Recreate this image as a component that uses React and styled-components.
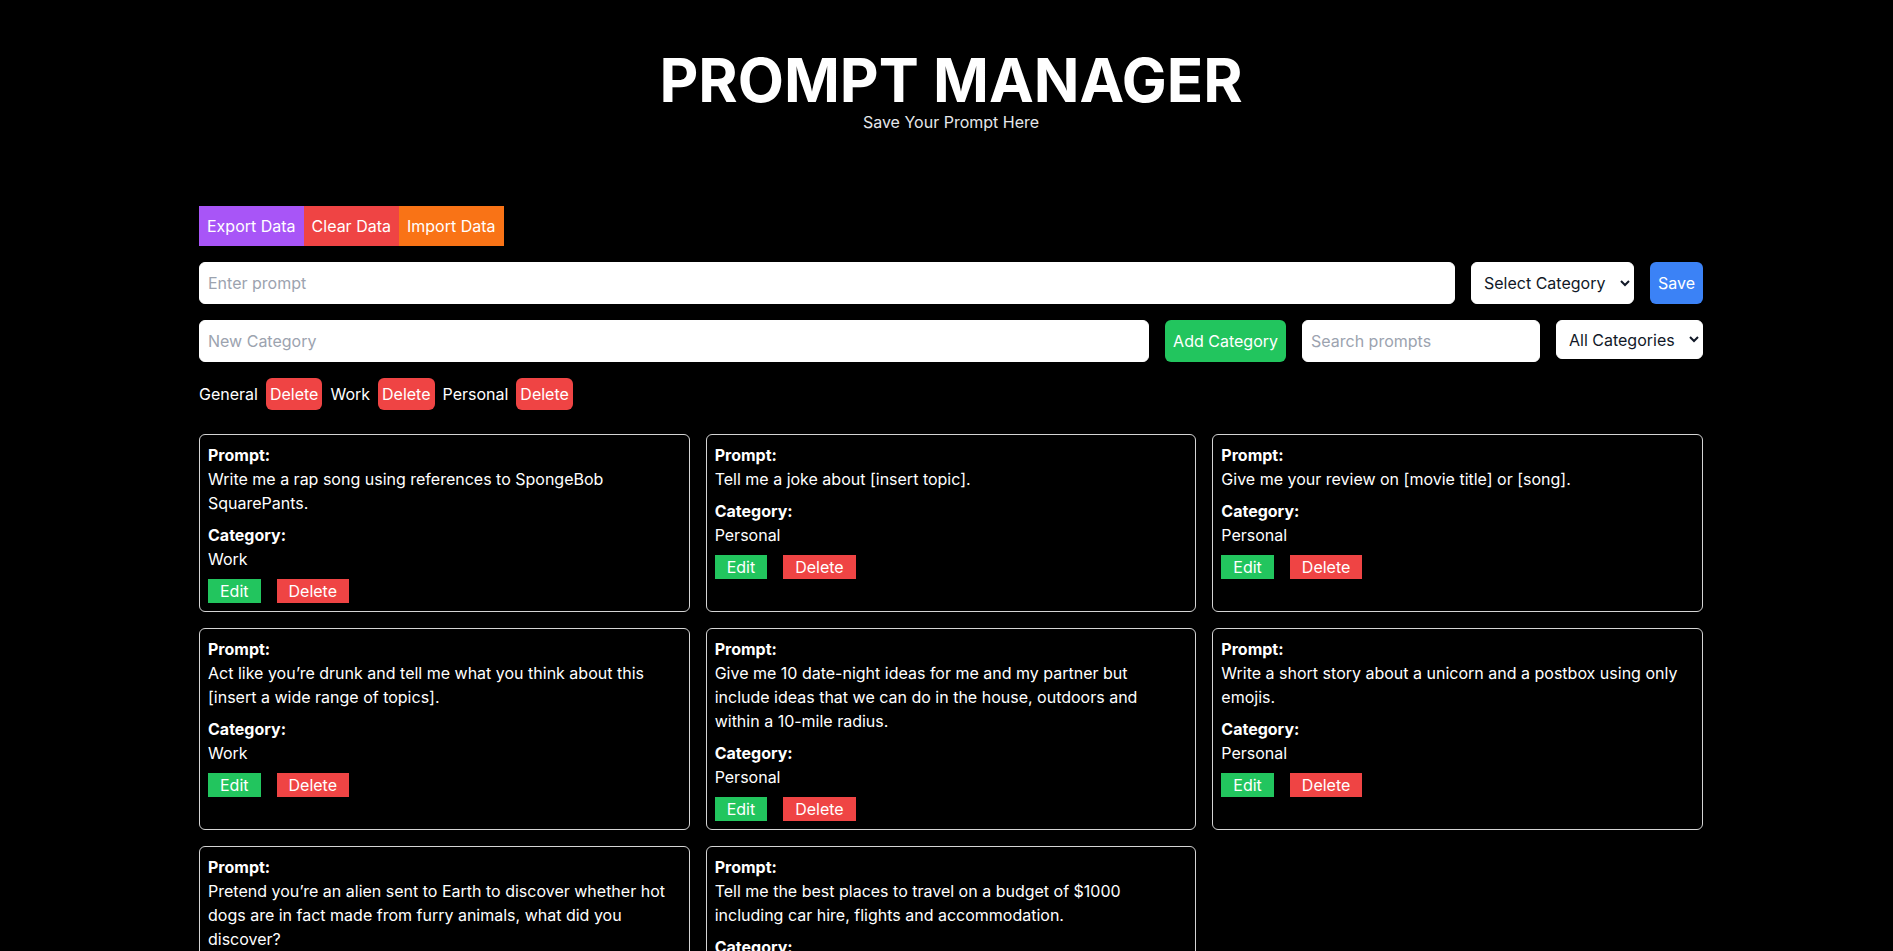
import styled, { createGlobalStyle } from "styled-components";

const prompts = [
  { text: "Write me a rap song using references to SpongeBob SquarePants.", category: "Work" },
  { text: "Tell me a joke about [insert topic].", category: "Personal" },
  { text: "Give me your review on [movie title] or [song].", category: "Personal" },
  { text: "Act like you’re drunk and tell me what you think about this [insert a wide range of topics].", category: "Work" },
  {
    text: "Give me 10 date-night ideas for me and my partner but include ideas that we can do in the house, outdoors and within a 10-mile radius.",
    category: "Personal",
  },
  { text: "Write a short story about a unicorn and a postbox using only emojis.", category: "Personal" },
  {
    text: "Pretend you’re an alien sent to Earth to discover whether hot dogs are in fact made from furry animals, what did you discover?",
    category: "General",
  },
  {
    text: "Tell me the best places to travel on a budget of $1000 including car hire, flights and accommodation.",
    category: "Personal",
  },
];

const categories = ["General", "Work", "Personal"];

const App = () => {
  return (
    <>
      <GlobalStyle />
      <Page>
        <Header>
          <Title>PROMPT MANAGER</Title>
          <Subtitle>Save Your Prompt Here</Subtitle>
        </Header>

        <DataBar>
          <DataButton $bg="#a855f7">Export Data</DataButton>
          <DataButton $bg="#ef4444">Clear Data</DataButton>
          <DataButton $bg="#f97316">Import Data</DataButton>
        </DataBar>

        <FormRow>
          <TextInput placeholder="Enter prompt" />
          <Select defaultValue="" $width="163px">
            <option value="">Select Category</option>
            {categories.map((c) => (
              <option key={c}>{c}</option>
            ))}
          </Select>
          <ActionButton $bg="#3b82f6">Save</ActionButton>
        </FormRow>

        <FormRow $align="flex-start">
          <TextInput placeholder="New Category" />
          <ActionButton $bg="#22c55e">Add Category</ActionButton>
          <TextInput placeholder="Search prompts" $width="238px" />
          <Select defaultValue="all" $width="147px" $height="39px">
            <option value="all">All Categories</option>
            {categories.map((c) => (
              <option key={c}>{c}</option>
            ))}
          </Select>
        </FormRow>

        <CategoryList>
          {categories.map((c) => (
            <CategoryItem key={c}>
              <span>{c}</span>
              <SmallDelete>Delete</SmallDelete>
            </CategoryItem>
          ))}
        </CategoryList>

        <CardGrid>
          {prompts.map((p, i) => (
            <Card key={i}>
              <Label>Prompt:</Label>
              <Body>{p.text}</Body>
              <Label $top>Category:</Label>
              <Body>{p.category}</Body>
              <CardActions>
                <CardButton $bg="#22c55e">Edit</CardButton>
                <CardButton $bg="#ef4444">Delete</CardButton>
              </CardActions>
            </Card>
          ))}
        </CardGrid>
      </Page>
    </>
  );
};

export default App;

// Styled Components
const GlobalStyle = createGlobalStyle`
  html, body {
    margin: 0;
    padding: 0;
    background: #000;
    color: #fff;
    font-family: Inter, "Noto Sans", sans-serif;
    font-size: 16px;
    line-height: 24px;
  }
  * {
    box-sizing: border-box;
  }
`;

const Page = styled.div`
  width: 1504px;
  margin-left: 199px;
  padding: 50px 0 40px;
`;

const Header = styled.header`
  text-align: center;
  margin-bottom: 72px;
`;

const Title = styled.h1`
  margin: 0;
  font-size: 60px;
  line-height: 60px;
  font-weight: 700;
  color: #fff;
`;

const Subtitle = styled.p`
  margin: 0;
  font-size: 16px;
  line-height: 24px;
  color: #e5e7eb;
`;

const DataBar = styled.div`
  display: flex;
  margin-bottom: 16px;
`;

const DataButton = styled.button`
  height: 40px;
  padding: 0 8px;
  border: none;
  background: ${(p) => p.$bg};
  color: #fff;
  font-family: inherit;
  font-size: 16px;
  line-height: 24px;
  cursor: pointer;
`;

const FormRow = styled.div`
  display: flex;
  align-items: ${(p) => p.$align || "stretch"};
  gap: 16px;
  margin-bottom: 16px;
`;

const TextInput = styled.input`
  flex: ${(p) => (p.$width ? `0 0 ${p.$width}` : "1 1 0")};
  min-width: 0;
  height: 42px;
  padding: 8px;
  border: 1px solid #fff;
  border-radius: 6px;
  background: #fff;
  color: #111827;
  font-family: inherit;
  font-size: 16px;
  outline: none;

  &::placeholder {
    color: #9ca3af;
  }
`;

const Select = styled.select`
  flex: 0 0 ${(p) => p.$width};
  height: ${(p) => p.$height || "42px"};
  padding: 0 6px 0 8px;
  border: 1px solid #fff;
  border-radius: 6px;
  background: #fff;
  color: #111827;
  font-family: inherit;
  font-size: 16px;
`;

const ActionButton = styled.button`
  flex: none;
  height: 42px;
  padding: 0 8px;
  border: none;
  border-radius: 6px;
  background: ${(p) => p.$bg};
  color: #fff;
  font-family: inherit;
  font-size: 16px;
  cursor: pointer;
`;

const CategoryList = styled.div`
  display: flex;
  align-items: center;
  gap: 8px;
  margin: 16px 0 24px;
`;

const CategoryItem = styled.div`
  display: flex;
  align-items: center;
  gap: 8px;
  font-size: 16px;
`;

const SmallDelete = styled.button`
  height: 32px;
  padding: 0 4px;
  border: none;
  border-radius: 6px;
  background: #ef4444;
  color: #fff;
  font-family: inherit;
  font-size: 16px;
  cursor: pointer;
`;

const CardGrid = styled.div`
  display: grid;
  grid-template-columns: repeat(3, 1fr);
  gap: 16px;
`;

const Card = styled.div`
  border: 1px solid #d4d4d4;
  border-radius: 6px;
  padding: 8px 12px 8px 8px;
`;

const Label = styled.p`
  margin: ${(p) => (p.$top ? "8px 0 0" : "0")};
  font-weight: 700;
  font-size: 16px;
  line-height: 24px;
`;

const Body = styled.p`
  margin: 0;
  font-size: 16px;
  line-height: 24px;
`;

const CardActions = styled.div`
  display: flex;
  gap: 16px;
  margin-top: 8px;
`;

const CardButton = styled.button`
  height: 24px;
  padding: 0 12px;
  border: none;
  background: ${(p) => p.$bg};
  color: #fff;
  font-family: inherit;
  font-size: 16px;
  line-height: 24px;
  cursor: pointer;
`;
